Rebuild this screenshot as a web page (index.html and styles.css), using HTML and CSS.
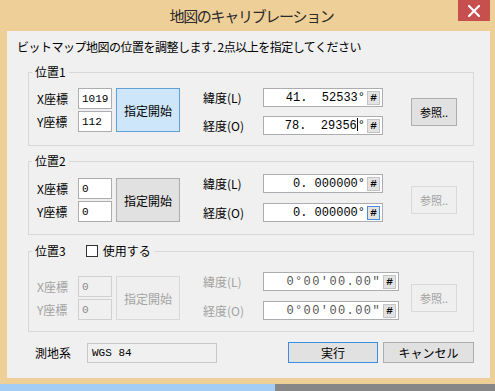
FILE: index.html
```html
<!DOCTYPE html>
<html lang="ja">
<head>
    <meta charset="UTF-8">
    <title>地図のキャリブレーション</title>
    <link rel="stylesheet" href="styles.css">
</head>
<body>
    <div class="window">
        <div class="titlebar">
            <span class="title">地図のキャリブレーション</span>
            <div class="close">
                <svg width="12" height="12" viewBox="0 0 12 12">
                    <path d="M1 1 L11 11 M11 1 L1 11" stroke="#fff" stroke-width="2.2" stroke-linecap="square" fill="none"/>
                </svg>
            </div>
        </div>

        <div class="frame">
            <div class="client">
                <p class="intro">ビットマップ地図の位置を調整します. 2点以上を指定してください</p>

                <!-- 位置1 -->
                <fieldset class="group g1">
                    <legend>位置1</legend>
                    <div class="group-body">
                        <div class="coords">
                            <span class="lbl">X座標</span><span class="field num">1019</span>
                            <span class="lbl">Y座標</span><span class="field num">112</span>
                        </div>
                        <div class="btn start active">指定開始</div>
                        <div class="latlon">
                            <span class="lbl">緯度(L)</span>
                            <span class="field deg"><span class="val">  41.  52533°</span><span class="hash">#</span></span>
                            <span class="lbl">経度(O)</span>
                            <span class="field deg"><span class="val">  78.  29356<span class="caret"></span>°</span><span class="hash">#</span></span>
                        </div>
                        <div class="btn ref">参照..</div>
                    </div>
                </fieldset>

                <!-- 位置2 -->
                <fieldset class="group g2">
                    <legend>位置2</legend>
                    <div class="group-body">
                        <div class="coords">
                            <span class="lbl">X座標</span><span class="field num">0</span>
                            <span class="lbl">Y座標</span><span class="field num">0</span>
                        </div>
                        <div class="btn start">指定開始</div>
                        <div class="latlon up">
                            <span class="lbl">緯度(L)</span>
                            <span class="field deg"><span class="val">   0. 000000°</span><span class="hash">#</span></span>
                            <span class="lbl">経度(O)</span>
                            <span class="field deg"><span class="val">   0. 000000°</span><span class="hash focus">#</span></span>
                        </div>
                        <div class="btn ref disabled">参照..</div>
                    </div>
                </fieldset>

                <!-- 位置3 -->
                <fieldset class="group g3">
                    <legend>位置3 <span class="check"><span class="box"></span>使用する</span></legend>
                    <div class="group-body off">
                        <div class="coords">
                            <span class="lbl">X座標</span><span class="field num">0</span>
                            <span class="lbl">Y座標</span><span class="field num">0</span>
                        </div>
                        <div class="btn start">指定開始</div>
                        <div class="latlon up">
                            <span class="lbl">緯度(L)</span>
                            <span class="field deg wide"><span class="val dms">0°00'00.00"</span><span class="hash">#</span></span>
                            <span class="lbl">経度(O)</span>
                            <span class="field deg wide"><span class="val dms">0°00'00.00"</span><span class="hash">#</span></span>
                        </div>
                        <div class="btn ref">参照..</div>
                    </div>
                </fieldset>

                <div class="footer">
                    <span class="lbl datum-lbl">測地系</span>
                    <span class="field datum">WGS 84</span>
                    <div class="actions">
                        <div class="btn default">実行</div>
                        <div class="btn">キャンセル</div>
                    </div>
                </div>
            </div>
        </div>

        <div class="taskbar"><div class="task-active"></div></div>
    </div>
</body>
</html>
```

FILE: styles.css
```css
body {
    margin: 0;
    padding: 0;
    font-family: "Noto Sans CJK JP", "DejaVu Sans", sans-serif;
    font-size: 12px;
    color: #000;
    overflow: hidden;
}

.window {
    width: 495px;
    height: 391px;
    display: flex;
    flex-direction: column;
    background-color: #efcf98;
}

.titlebar {
    height: 31px;
    flex: none;
    display: flex;
    align-items: center;
    justify-content: center;
    position: relative;
}

.title {
    font-size: 15px;
    letter-spacing: -1.3px;
    color: #2a2a2a;
    margin-left: 8px;
}

.close {
    position: absolute;
    top: 0;
    left: 458px;
    width: 32px;
    height: 21px;
    background-color: #c74f4e;
    display: flex;
    align-items: center;
    justify-content: center;
}

.frame {
    flex: 1;
    padding: 0 5px 6px 7px;
    display: flex;
}

.client {
    flex: 1;
    background-color: #f0f0f0;
    padding: 8px 0 0 10px;
}

.intro {
    margin: 0;
    line-height: 16px;
    letter-spacing: -0.5px;
}

.group {
    margin: 10px 16px 0 11px;
    padding: 9px 0 10px 8px;
    border: 1px solid #d8d8d8;
    min-width: 0;
}

.group legend {
    padding: 0 3px;
    margin-left: -5px;
    line-height: 14px;
    display: flex;
    align-items: center;
}

.g2 {
    margin-top: 8px;
    padding-top: 10px;
    padding-bottom: 12px;
}

.g3 {
    margin-top: 9px;
    padding-top: 18px;
    padding-bottom: 11px;
}

.check {
    display: inline-flex;
    align-items: center;
    margin-left: 20px;
}

.box {
    width: 10px;
    height: 10px;
    border: 1px solid #333;
    background-color: #fff;
    margin-right: 5px;
}

.group-body {
    display: flex;
    align-items: flex-start;
}

.coords {
    display: grid;
    grid-template-columns: 41px 34px;
    row-gap: 2px;
    align-items: center;
}

.field {
    box-sizing: border-box;
    background-color: #fff;
    border: 1px solid #abadb3;
    display: flex;
    align-items: center;
}

.num {
    height: 21px;
    padding-left: 3px;
    font-family: "Liberation Mono", monospace;
    font-size: 11px;
}

.btn {
    box-sizing: border-box;
    border: 1px solid #adadad;
    background-color: #e1e1e1;
    display: flex;
    align-items: center;
    justify-content: center;
}

.start {
    width: 64px;
    height: 44px;
    margin-left: 4px;
}

.start.active {
    background-color: #cde6f9;
    border-color: #5fa0d8;
}

.latlon {
    display: grid;
    grid-template-columns: 60px 148px;
    grid-template-rows: 19px 19px;
    row-gap: 9px;
    align-items: center;
    margin-left: 23px;
}

.latlon.up {
    margin-top: -4px;
    row-gap: 10px;
}

.deg {
    width: 120px;
    height: 19px;
    justify-content: flex-end;
    padding-right: 2px;
}

.deg.wide {
    width: 136px;
}

.val {
    white-space: pre;
    font-family: "Liberation Mono", monospace;
    font-size: 12px;
    margin-right: 2px;
}

.val.dms {
    letter-spacing: 1.4px;
    color: #555;
}

.caret {
    display: inline-block;
    width: 1px;
    height: 13px;
    background-color: #000;
    vertical-align: -2px;
}

.hash {
    box-sizing: border-box;
    width: 13px;
    height: 14px;
    border: 1px solid #c4c4c4;
    background-color: #e3e3e3;
    font-family: "Liberation Mono", monospace;
    font-weight: bold;
    font-size: 11px;
    line-height: 12px;
    text-align: center;
}

.hash.focus {
    border-color: #4a90d9;
}

.ref {
    width: 46px;
    height: 28px;
    align-self: center;
    font-size: 11px;
}

.disabled,
.off .lbl,
.off .btn {
    color: #a3a3a3;
}

.off .btn {
    background-color: #efefef;
    border-color: #d9d9d9;
}

.off .num {
    background-color: #f0f0f0;
    border-color: #d0d0d0;
    color: #8a8a8a;
}

.ref.disabled {
    background-color: #efefef;
    border-color: #d9d9d9;
}

.footer {
    display: flex;
    align-items: center;
    margin: 10px 16px 0 18px;
}

.datum-lbl {
    width: 52px;
}

.datum {
    width: 130px;
    height: 20px;
    background-color: #f0f0f0;
    border-color: #c8c8c8;
    padding-left: 4px;
    font-family: "Liberation Mono", monospace;
    font-size: 11px;
}

.actions {
    margin-left: auto;
    display: flex;
    gap: 5px;
}

.actions .btn {
    width: 91px;
    height: 21px;
}

.actions .default {
    width: 90px;
    border-color: #3c8ee0;
}

.taskbar {
    height: 7px;
    flex: none;
    background-color: #878787;
}

.task-active {
    width: 275px;
    height: 100%;
    background-color: #a4cdf5;
}
```
